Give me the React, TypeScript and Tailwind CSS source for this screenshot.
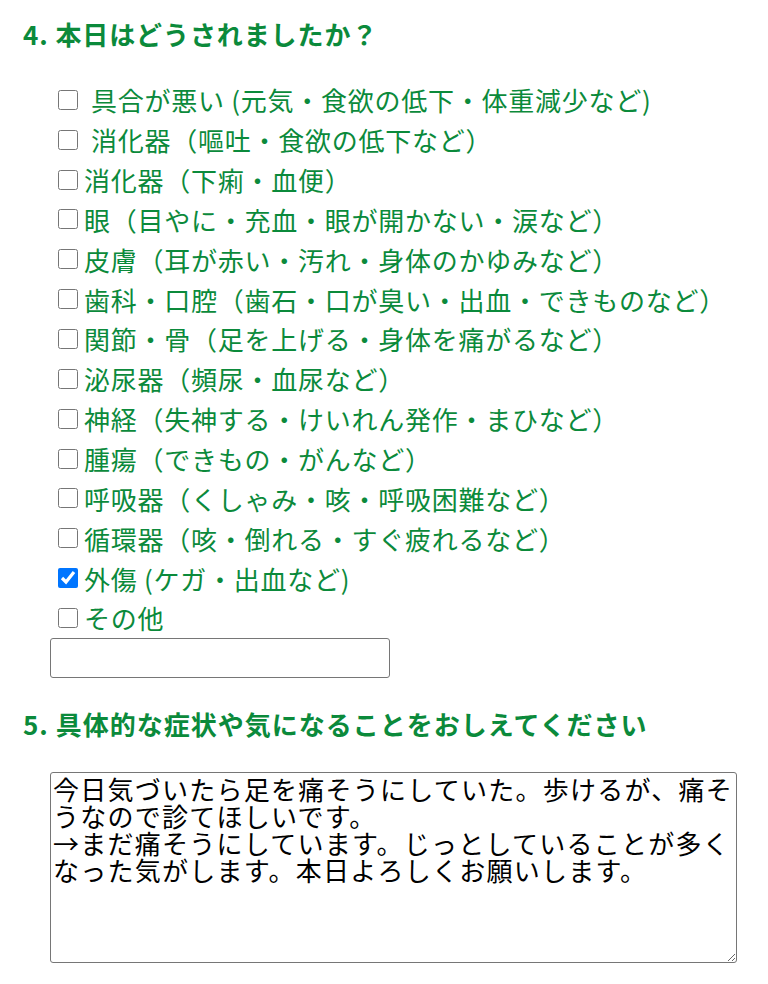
import { useState } from "react";

const items = [
  { label: "具合が悪い (元気・食欲の低下・体重減少など)", spaced: true },
  { label: "消化器（嘔吐・食欲の低下など）", spaced: true },
  { label: "消化器（下痢・血便）" },
  { label: "眼（目やに・充血・眼が開かない・涙など）" },
  { label: "皮膚（耳が赤い・汚れ・身体のかゆみなど）" },
  { label: "歯科・口腔（歯石・口が臭い・出血・できものなど）" },
  { label: "関節・骨（足を上げる・身体を痛がるなど）" },
  { label: "泌尿器（頻尿・血尿など）" },
  { label: "神経（失神する・けいれん発作・まひなど）" },
  { label: "腫瘍（できもの・がんなど）" },
  { label: "呼吸器（くしゃみ・咳・呼吸困難など）" },
  { label: "循環器（咳・倒れる・すぐ疲れるなど）" },
  { label: "外傷 (ケガ・出血など)", checked: true },
  { label: "その他" },
];

export default function App() {
  const [checked, setChecked] = useState<boolean[]>(items.map((i) => !!i.checked));
  const [note, setNote] = useState(
    "今日気づいたら足を痛そうにしていた。歩けるが、痛そうなので診てほしいです。\n→まだ痛そうにしています。じっとしていることが多くなった気がします。本日よろしくお願いします。"
  );

  return (
    <div
      className="min-h-[984px] bg-white pl-[23px] pt-[15px] text-[#0b8a3b]"
      style={{ fontFamily: '"Noto Sans CJK JP", "Noto Sans", sans-serif' }}
    >
      <h2 className="text-[26px] font-bold leading-[38px] tracking-[0.9px]">4. 本日はどうされましたか？</h2>

      <div className="mt-[27px] flex flex-col">
        {items.map((item, i) => (
          <label key={i} className="flex h-[39.85px] items-center pl-[35px] text-[26px] tracking-[0.75px]">
            <input
              type="checkbox"
              className="m-0 h-5 w-5 shrink-0"
              checked={checked[i]}
              onChange={() => setChecked(checked.map((c, j) => (j === i ? !c : c)))}
            />
            <span className={item.spaced ? "ml-[13px]" : "ml-[6px]"}>{item.label}</span>
          </label>
        ))}
      </div>

      <input
        type="text"
        className="ml-[27px] block h-[40px] w-[340px] rounded-[3px] border border-[#767676] px-2"
      />

      <h2 className="mt-[27px] text-[26px] font-bold leading-[38px] tracking-[1px]">
        5. 具体的な症状や気になることをおしえてください
      </h2>

      <textarea
        className="ml-[27px] mt-[29px] block h-[191px] w-[687px] resize rounded-[3px] border border-[#767676] px-[2px] py-[2px] text-[26px] leading-[27px] tracking-[1.25px] text-black"
        value={note}
        onChange={(e) => setNote(e.target.value)}
      />
    </div>
  );
}
